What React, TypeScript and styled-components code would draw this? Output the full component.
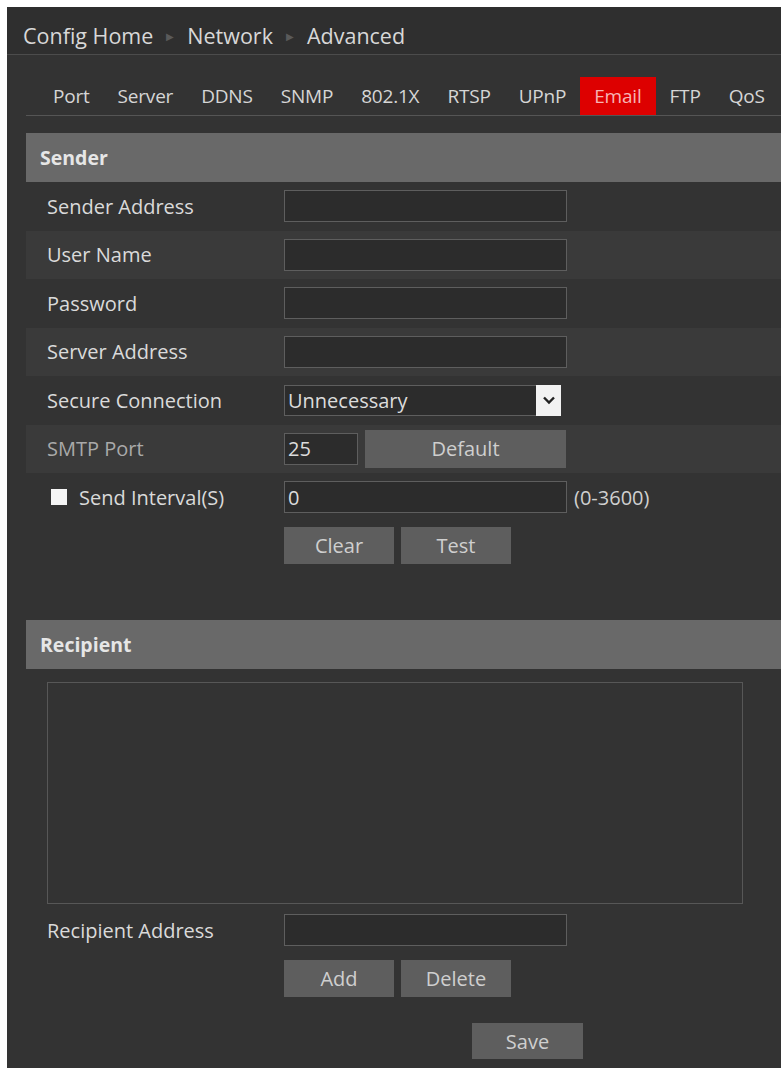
import React from 'react';
import styled, { createGlobalStyle } from 'styled-components';

const GlobalStyle = createGlobalStyle`
  html, body {
    margin: 0;
    padding: 0;
    background: #ffffff;
  }
  body {
    font-family: "Open Sans", "Noto Sans", sans-serif;
  }
`;

const Panel = styled.div`
  margin: 7px 3px 2px 7px;
  height: 1061px;
  background: #333333;
  color: #dcdcdc;
  display: flex;
  flex-direction: column;
  overflow: hidden;
`;

const Breadcrumb = styled.div`
  height: 48px;
  box-sizing: border-box;
  padding: 10px 0 0 16px;
  background: #2f2f2f;
  border-bottom: 1px solid #4c4c4c;
  display: flex;
  align-items: center;
  gap: 13px;
  font-size: 21.5px;
  color: #d8d8d8;
  flex-shrink: 0;
`;

const Sep = styled.span`
  color: #5a5a5a;
  font-size: 10px;
`;

const Body = styled.div`
  padding-left: 19px;
  display: flex;
  flex-direction: column;
`;

const TabBar = styled.div`
  height: 61px;
  box-sizing: border-box;
  display: flex;
  align-items: flex-end;
  padding-left: 13px;
  border-bottom: 1px solid #555555;
`;

const Tab = styled.div<{ $active?: boolean }>`
  height: 38px;
  display: flex;
  align-items: center;
  padding: 0 14px;
  font-size: 19px;
  letter-spacing: -0.2px;
  color: ${(p) => (p.$active ? '#f7b5b5' : '#d6d6d6')};
  background: ${(p) => (p.$active ? '#dd0000' : 'transparent')};
`;

const SectionBar = styled.div<{ $top: number }>`
  margin-top: ${(p) => p.$top}px;
  height: 49px;
  background: #696969;
  display: flex;
  align-items: center;
  padding-left: 14px;
  font-size: 19.5px;
  font-weight: 700;
  color: #e6e6e6;
`;

const Row = styled.div<{ $shade?: boolean }>`
  height: 48.5px;
  display: grid;
  grid-template-columns: 237px 1fr;
  align-items: center;
  padding-left: 21px;
  background: ${(p) => (p.$shade ? '#3a3a3a' : 'transparent')};
`;

const Label = styled.div<{ $dim?: boolean }>`
  font-size: 20px;
  color: ${(p) => (p.$dim ? '#a9a9a9' : '#dadada')};
  display: flex;
  align-items: center;
`;

const Field = styled.div`
  display: flex;
  align-items: center;
  gap: 7px;
`;

const TextBox = styled.div<{ $w?: number }>`
  width: ${(p) => p.$w ?? 283}px;
  height: 32px;
  box-sizing: border-box;
  border: 1px solid #5e5e5e;
  background: #2c2c2c;
  display: flex;
  align-items: center;
  padding-left: 3px;
  font-size: 20px;
  color: #dcdcdc;
`;

const SelectBox = styled.div`
  width: 277px;
  height: 31px;
  box-sizing: border-box;
  border: 1px solid #5e5e5e;
  background: #2c2c2c;
  display: flex;
  align-items: center;
  justify-content: space-between;
  padding-left: 3px;
  font-size: 20px;
  color: #dcdcdc;
`;

const Arrow = styled.div`
  width: 25px;
  height: 31px;
  margin-right: -1px;
  background: #f2f2f2;
  display: flex;
  align-items: center;
  justify-content: center;
`;

const Button = styled.div<{ $w?: number; $h?: number }>`
  width: ${(p) => p.$w ?? 110}px;
  height: ${(p) => p.$h ?? 37}px;
  background: #5e5e5e;
  color: #cfcfcf;
  font-size: 20px;
  display: flex;
  align-items: center;
  justify-content: center;
`;

const Checkbox = styled.span`
  width: 16px;
  height: 16px;
  background: #f5f5f5;
  margin: 0 12px 0 4px;
`;

const Hint = styled.span`
  font-size: 20px;
  color: #d0d0d0;
`;

const ListBox = styled.div`
  margin: 13px 38px 2px 21px;
  height: 222px;
  box-sizing: border-box;
  border: 1px solid #575757;
`;

const SaveRow = styled.div`
  padding-top: 20px;
  padding-left: 446px;
`;

const tabs = ['Port', 'Server', 'DDNS', 'SNMP', '802.1X', 'RTSP', 'UPnP', 'Email', 'FTP', 'QoS'];

const App: React.FC = () => {
  return (
    <>
      <GlobalStyle />
      <Panel>
        <Breadcrumb>
          <span>Config Home</span>
          <Sep>▶</Sep>
          <span>Network</span>
          <Sep>▶</Sep>
          <span>Advanced</span>
        </Breadcrumb>
        <Body>
          <TabBar>
            {tabs.map((t) => (
              <Tab key={t} $active={t === 'Email'}>
                {t}
              </Tab>
            ))}
          </TabBar>

          <SectionBar $top={17}>Sender</SectionBar>
          <Row>
            <Label>Sender Address</Label>
            <TextBox />
          </Row>
          <Row $shade>
            <Label>User Name</Label>
            <TextBox />
          </Row>
          <Row>
            <Label>Password</Label>
            <TextBox />
          </Row>
          <Row $shade>
            <Label>Server Address</Label>
            <TextBox />
          </Row>
          <Row>
            <Label>Secure Connection</Label>
            <SelectBox>
              Unnecessary
              <Arrow>
                <svg width="14" height="10" viewBox="0 0 14 10">
                  <path d="M2 2.5 L7 7.5 L12 2.5" fill="none" stroke="#222" strokeWidth="2.4" />
                </svg>
              </Arrow>
            </SelectBox>
          </Row>
          <Row $shade>
            <Label $dim>SMTP Port</Label>
            <Field>
              <TextBox $w={74}>25</TextBox>
              <Button $w={201} $h={38}>Default</Button>
            </Field>
          </Row>
          <Row>
            <Label>
              <Checkbox />
              Send Interval(S)
            </Label>
            <Field>
              <TextBox>0</TextBox>
              <Hint>(0-3600)</Hint>
            </Field>
          </Row>
          <Row>
            <span />
            <Field>
              <Button>Clear</Button>
              <Button>Test</Button>
            </Field>
          </Row>

          <SectionBar $top={50}>Recipient</SectionBar>
          <ListBox />
          <Row>
            <Label>Recipient Address</Label>
            <TextBox />
          </Row>
          <Row>
            <span />
            <Field>
              <Button>Add</Button>
              <Button>Delete</Button>
            </Field>
          </Row>
          <SaveRow>
            <Button $w={111} $h={36}>Save</Button>
          </SaveRow>
        </Body>
      </Panel>
    </>
  );
};

export default App;
